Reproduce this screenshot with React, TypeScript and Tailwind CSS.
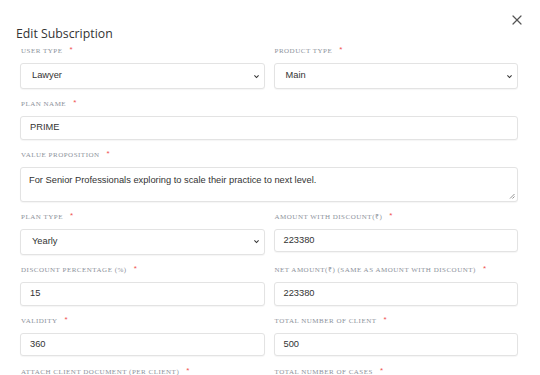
import { X } from "lucide-react";

const sans = { fontFamily: '"Liberation Sans", Arial, sans-serif' };

function Label({ text }: { text: string }) {
  return (
    <div className="flex h-[12px] items-center leading-[12px] mb-[6px] pl-[1px]">
      <span className="font-['Liberation_Serif',serif] text-[7px] uppercase tracking-[0.5px] text-[#8d929b]">
        {text}
      </span>
      <span className="ml-[7px] -mt-[2px] text-[8px] text-[#f05252] font-['Liberation_Sans',sans-serif]">*</span>
    </div>
  );
}

function Chevron() {
  return (
    <svg width="7" height="7" viewBox="0 0 10 10" className="text-[#333]">
      <path d="M2 3.5 L5 6.5 L8 3.5" fill="none" stroke="currentColor" strokeWidth="1.5" />
    </svg>
  );
}

function SelectBox({ value }: { value: string }) {
  return (
    <div
      className="flex h-[26px] items-center justify-between rounded-[3px] border border-[#e3e3e3] bg-white pl-[11px] pr-[4px] text-[9.3px] text-[#333] shadow-[0_1px_1px_rgba(0,0,0,0.04)]"
      style={sans}
    >
      <span>{value}</span>
      <Chevron />
    </div>
  );
}

function InputBox({ value }: { value: string }) {
  return (
    <div
      className="flex h-[23.5px] items-center rounded-[3px] border border-[#e3e3e3] bg-white pl-[9px] text-[9.3px] text-[#333] shadow-[0_1px_1px_rgba(0,0,0,0.04)]"
      style={sans}
    >
      {value}
    </div>
  );
}

function Field({ label, children }: { label: string; children: React.ReactNode }) {
  return (
    <div className="flex flex-col">
      <Label text={label} />
      {children}
    </div>
  );
}

export default function App() {
  return (
    <div className="relative h-[375px] w-[540px] overflow-hidden bg-white">
      <button className="absolute right-[15px] top-[12px] text-[#555]">
        <X size={16} strokeWidth={1.8} />
      </button>
      <div className="pl-[20px] pr-[22px] pt-[25px]">
        <h2
          className="-ml-[4px] text-[12.3px] leading-[17px] text-[#333]"
          style={{ fontFamily: '"Open Sans", "Noto Sans", sans-serif' }}
        >
          Edit Subscription
        </h2>
        <div className="mt-[3px] grid grid-cols-2 gap-x-[9px] gap-y-[9.3px]">
          <Field label="User Type">
            <SelectBox value="Lawyer" />
          </Field>
          <Field label="Product Type">
            <SelectBox value="Main" />
          </Field>
          <div className="col-span-2">
            <Field label="Plan Name">
              <InputBox value="PRIME" />
            </Field>
          </div>
          <div className="col-span-2">
            <Field label="Value Proposition">
              <div
                className="relative h-[34.5px] rounded-[3px] border border-[#e3e3e3] bg-white px-[8px] pt-[6px] text-[9.3px] leading-[12px] text-[#333] shadow-[0_1px_1px_rgba(0,0,0,0.04)]"
                style={sans}
              >
                For Senior Professionals exploring to scale their practice to next level.
                <svg width="6" height="6" viewBox="0 0 6 6" className="absolute bottom-[2px] right-[2px]">
                  <path d="M5.5 1 L1 5.5 M5.5 3.5 L3.5 5.5" stroke="#777" strokeWidth="0.8" />
                </svg>
              </div>
            </Field>
          </div>
          <Field label="Plan Type">
            <SelectBox value="Yearly" />
          </Field>
          <Field label="Amount with Discount(₹)">
            <InputBox value="223380" />
          </Field>
          <Field label="Discount Percentage (%)">
            <InputBox value="15" />
          </Field>
          <Field label="Net Amount(₹) (Same as Amount with Discount)">
            <InputBox value="223380" />
          </Field>
          <Field label="Validity">
            <InputBox value="360" />
          </Field>
          <Field label="Total Number of Client">
            <InputBox value="500" />
          </Field>
          <Field label="Attach Client Document (Per Client)">
            <InputBox value="" />
          </Field>
          <Field label="Total Number of Cases">
            <InputBox value="" />
          </Field>
        </div>
      </div>
    </div>
  );
}
